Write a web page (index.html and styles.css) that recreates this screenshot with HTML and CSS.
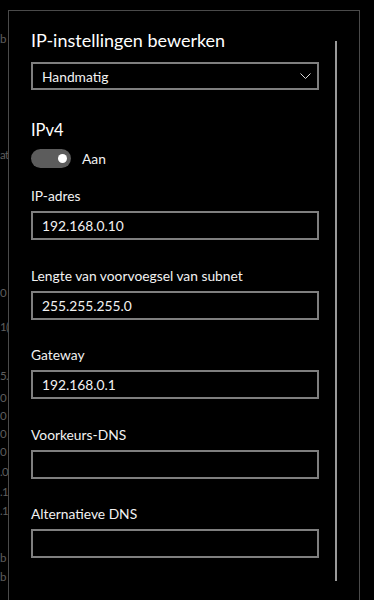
FILE: index.html
```html
<!DOCTYPE html>
<html lang="nl">
<head>
<meta charset="utf-8">
<title>IP-instellingen bewerken</title>
<link rel="stylesheet" href="styles.css">
</head>
<body>
<div class="page">
  <div class="backdrop" aria-hidden="true">
    <div class="frag f1">b</div>
    <div class="frag f2">at</div>
    <div class="frag f3">0</div>
    <div class="frag f4">1(</div>
    <div class="frag f5">5.</div>
    <div class="frag f6">0</div>
    <div class="frag f7">0</div>
    <div class="frag f7">0</div>
    <div class="frag f7">0</div>
    <div class="frag f8">.0</div>
    <div class="frag f8">.1</div>
    <div class="frag f9">.1</div>
    <div class="frag f10">b</div>
    <div class="frag f9">b</div>
  </div>

  <div class="dialog">
    <div class="dialog-body">
      <div class="content">
        <h1 class="title">IP-instellingen bewerken</h1>
        <div class="select">
          <span>Handmatig</span>
          <svg class="chevron" width="11" height="6" viewBox="0 0 11 6"><path d="M0.5 0.5 L5.5 5.5 L10.5 0.5" fill="none" stroke="#d8d8d8" stroke-width="1"/></svg>
        </div>

        <h2 class="section">IPv4</h2>
        <div class="toggle-row">
          <span class="toggle"><span class="knob"></span></span>
          <span class="toggle-label">Aan</span>
        </div>

        <div class="field first">
          <div class="label">IP-adres</div>
          <div class="input">192.168.0.10</div>
        </div>
        <div class="field">
          <div class="label">Lengte van voorvoegsel van subnet</div>
          <div class="input">255.255.255.0</div>
        </div>
        <div class="field">
          <div class="label">Gateway</div>
          <div class="input">192.168.0.1</div>
        </div>
        <div class="field">
          <div class="label">Voorkeurs-DNS</div>
          <div class="input"></div>
        </div>
        <div class="field">
          <div class="label">Alternatieve DNS</div>
          <div class="input"></div>
        </div>
      </div>
      <div class="scrollbar"></div>
    </div>
  </div>
</div>
</body>
</html>
```

FILE: styles.css
```css
* { box-sizing: border-box; }

html, body {
  margin: 0;
  padding: 0;
  background: #000;
}

body {
  font-family: Lato, "Noto Sans", sans-serif;
  color: #f2f2f2;
  overflow: hidden;
}

.page {
  position: relative;
  width: 374px;
  height: 600px;
  overflow: hidden;
  background: #000;
}

/* background page, mostly hidden behind the dialog */
.backdrop {
  display: flex;
  flex-direction: column;
  padding-left: 0;
  color: #5e5e5e;
  font-family: Lato, sans-serif;
  font-size: 11.5px;
  line-height: 12px;
  letter-spacing: -0.6px;
}
.frag { height: 19px; display: flex; align-items: flex-end; }
.f1 { margin-top: 26px; }
.f2 { margin-top: 97px; }
.f3 { margin-top: 119px; }
.f4 { margin-top: 15px; }
.f5 { margin-top: 30px; }
.f6 { margin-top: 3px; }
.f7 { margin-top: -1px; }
.f8 { margin-top: 1px; }
.f9 { margin-top: 0; }
.f10 { margin-top: 28px; }

.dialog {
  position: absolute;
  left: 8px;
  top: 10px;
  width: 352px;
  height: 620px;
  border: 1px solid #4a4a4a;
  background: #000;
}

.dialog-body {
  display: flex;
  padding-left: 22px;
}

.content {
  width: 288px;
  display: flex;
  flex-direction: column;
}

.title {
  margin: 17px 0 0;
  font-size: 18px;
  line-height: 24px;
  font-weight: 400;
  color: #fff;
}

.select {
  margin-top: 10px;
  height: 28px;
  border: 2px solid #7f7f7f;
  display: flex;
  align-items: center;
  justify-content: space-between;
  padding: 0 6px 0 9px;
  font-size: 13.8px;
}
.chevron { display: block; }

.section {
  margin: 29px 0 0;
  font-size: 16.5px;
  line-height: 22px;
  font-weight: 400;
  color: #fff;
}

.toggle-row {
  margin-top: 8px;
  display: flex;
  align-items: center;
  gap: 11px;
  font-size: 13.8px;
}
.toggle {
  width: 40px;
  height: 19px;
  border-radius: 10px;
  background: #5c5c5c;
  display: flex;
  align-items: center;
  justify-content: flex-end;
  padding-right: 4px;
}
.knob {
  width: 9px;
  height: 9px;
  border-radius: 50%;
  background: #fff;
}

.field {
  margin-top: 25.5px;
  display: flex;
  flex-direction: column;
  gap: 5px;
}
.field.first { margin-top: 18px; }

.label {
  font-size: 13.8px;
  line-height: 20px;
}

.input {
  height: 29px;
  border: 2px solid #7f7f7f;
  padding: 0 9px;
  font-size: 13.8px;
  line-height: 25px;
}

.scrollbar {
  margin-left: 16px;
  margin-top: 30px;
  width: 2px;
  height: 540px;
  background: #9a9a9a;
}
```
